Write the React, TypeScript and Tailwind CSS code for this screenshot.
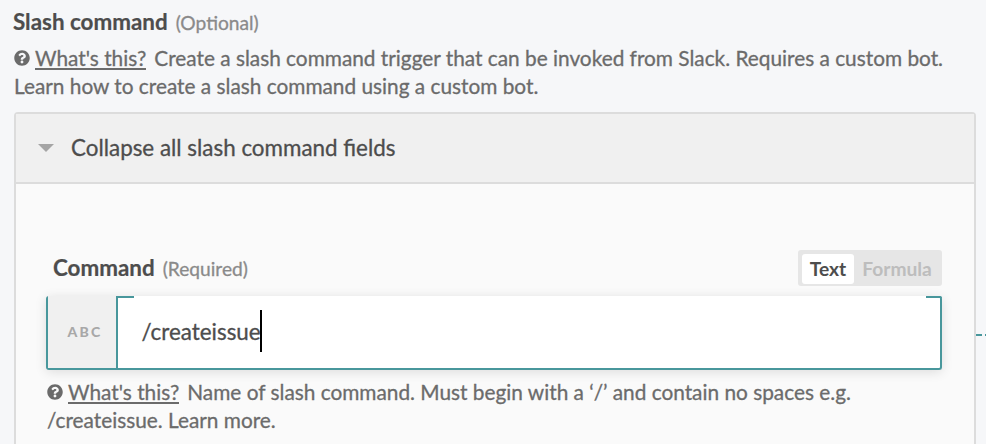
import { FaQuestionCircle } from "react-icons/fa";

function Help({ rest, second }: { rest: string; second: string }) {
  return (
    <div className="whitespace-nowrap text-[20.82px] leading-[28px] text-[#6b6b6b] [-webkit-text-stroke:0.3px]">
      <div className="flex h-7 items-center">
        <FaQuestionCircle className="mr-[5px] size-4 shrink-0" />
        <span className="mr-2 h-6 border-b-2 border-[#6b6b6b] leading-6">What's this?</span>
        <span>{rest}</span>
      </div>
      <div>{second}</div>
    </div>
  );
}

function Label({ title, hint }: { title: string; hint: string }) {
  return (
    <div className="flex items-baseline whitespace-nowrap leading-7">
      <span className="text-[22.4px] font-bold text-[#4d4d4d] [-webkit-text-stroke:0.2px]">{title}</span>
      <span className="ml-2 text-[19.2px] text-[#8a8a8a] [-webkit-text-stroke:0.3px]">{hint}</span>
    </div>
  );
}

export default function App() {
  return (
    <div className="flex h-[444px] w-[986px] flex-col overflow-hidden bg-[#f6f7f9] font-['Lato',sans-serif]">
      <div className="h-[44px] shrink-0 pl-[13px] pt-2">
        <Label title="Slash command" hint="(Optional)" />
      </div>
      <div className="h-[68px] shrink-0 pl-[14px]">
        <Help
          rest="Create a slash command trigger that can be invoked from Slack. Requires a custom bot."
          second="Learn how to create a slash command using a custom bot."
        />
      </div>
      <div className="flex">
        <div className="ml-[14px] h-[340px] w-[962px] shrink-0 rounded-t-[4px] border-2 border-[#dcdcdc] bg-[#fafafa]">
          <div className="flex h-[70px] items-center border-b-2 border-[#dcdcdc] bg-[#f0f0f0] pl-[22px]">
            <svg className="mr-[17px] h-2 w-4" viewBox="0 0 16 8" fill="#a5a5a5">
              <path d="M0 0h16L8 8z" />
            </svg>
            <span className="text-[22.4px] text-[#4d4d4d] [-webkit-text-stroke:0.3px]">Collapse all slash command fields</span>
          </div>
          <div className="pl-[30px] pr-8 pt-[66px]">
            <div className="flex h-9 items-center justify-between pl-[7px]">
              <Label title="Command" hint="(Required)" />
              <div className="flex h-9 w-36 rounded-[3px] bg-[#e6e6e6] p-1 text-[19.2px] font-bold leading-[30px]">
                <span className="h-[28px] w-[52px] shrink-0 rounded-[3px] bg-white pb-[30px] text-center leading-[30px] text-[#4d4d4d]">Text</span>
                <span className="w-[84px] pl-[2px] text-center leading-[30px] text-[#bdbdbd]">Formula</span>
              </div>
            </div>
            <div className="relative mt-[10px] flex h-[74px] rounded-[3px] border-x-2 border-b-2 border-[#48979c] bg-white shadow-[0_2px_12px_rgba(0,0,0,0.12)]">
              <div className="flex w-[70px] items-center justify-center border-r-2 border-[#48979c] bg-[#f0f0f0] pb-[2px] pl-[6px] text-[14px] font-black tracking-[2.2px] text-[#a8a8a8]">
                ABC
              </div>
              <div className="flex items-center pb-[2px] pl-[23.5px] text-[22.4px] text-[#4d4d4d] [-webkit-text-stroke:0.3px]">
                <span className="pt-[2px]">/createissue</span>
                <span className="-ml-px h-[42px] w-[2px] bg-black" />
              </div>
              <span className="absolute left-[68px] top-0 h-[2px] w-[18px] bg-[#48979c]" />
              <span className="absolute -right-[2px] top-0 h-[2px] w-4 rounded-tr-[3px] bg-[#48979c]" />
            </div>
            <div className="pl-px pt-2">
              <Help
                rest="Name of slash command. Must begin with a ‘/’ and contain no spaces e.g."
                second="/createissue. Learn more."
              />
            </div>
          </div>
        </div>
        <div className="flex gap-[3px] pt-[222px]">
          <span className="h-[2px] w-[6px] bg-[#48979c]" />
          <span className="h-[2px] w-[6px] bg-[#48979c]" />
        </div>
      </div>
    </div>
  );
}
